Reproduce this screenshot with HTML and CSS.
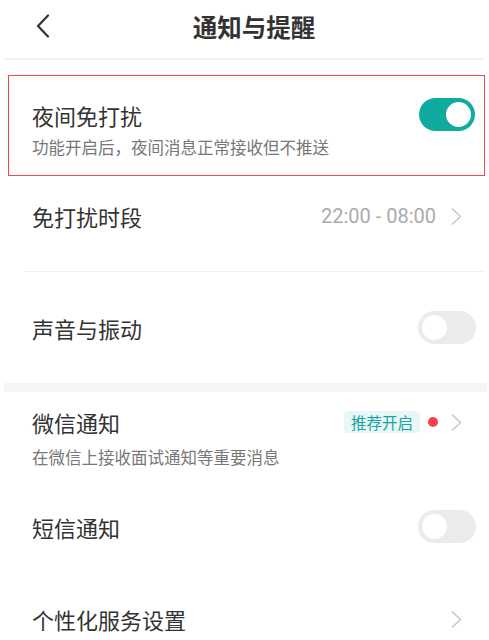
FILE: index.html
```html
<!DOCTYPE html>
<html lang="zh-CN">
<head>
    <meta charset="UTF-8">
    <meta name="viewport" content="width=device-width, initial-scale=1.0">
    <title>通知与提醒</title>
    <link rel="stylesheet" href="styles.css">
</head>
<body>
    <header class="topbar">
        <a class="back" href="#">
            <svg width="14" height="24" viewBox="0 0 14 24"><path d="M12 1.5 L2 12 L12 22.5" fill="none" stroke="#333" stroke-width="2.2" stroke-linecap="round" stroke-linejoin="round"/></svg>
        </a>
        <h1>通知与提醒</h1>
        <span class="spacer"></span>
    </header>
    <div class="line"></div>

    <section class="highlight">
        <div class="row-main">
            <span class="label">夜间免打扰</span>
            <span class="switch on"></span>
        </div>
        <p class="desc">功能开启后，夜间消息正常接收但不推送</p>
    </section>

    <div class="item item-period">
        <span class="label">免打扰时段</span>
        <span class="extra">
            <span class="value">22:00 - 08:00</span>
            <svg class="arrow" width="12" height="19" viewBox="0 0 12 19"><path d="M2 1.5 L10.5 9.5 L2 17.5" fill="none" stroke="#c6c6c6" stroke-width="1.5" stroke-linejoin="round"/></svg>
        </span>
    </div>
    <div class="thin"></div>

    <div class="item item-toggle">
        <span class="label">声音与振动</span>
        <span class="switch"></span>
    </div>
    <div class="thick"></div>

    <div class="item item-wechat">
        <div class="row-main">
            <span class="label">微信通知</span>
            <span class="extra">
                <span class="badge">推荐开启</span>
                <span class="dot"></span>
                <svg class="arrow" width="12" height="19" viewBox="0 0 12 19"><path d="M2 1.5 L10.5 9.5 L2 17.5" fill="none" stroke="#c6c6c6" stroke-width="1.5" stroke-linejoin="round"/></svg>
            </span>
        </div>
        <p class="desc">在微信上接收面试通知等重要消息</p>
    </div>

    <div class="item item-toggle item-sms">
        <span class="label">短信通知</span>
        <span class="switch"></span>
    </div>

    <div class="item item-last">
        <span class="label">个性化服务设置</span>
        <span class="extra">
            <svg class="arrow" width="12" height="19" viewBox="0 0 12 19"><path d="M2 1.5 L10.5 9.5 L2 17.5" fill="none" stroke="#c6c6c6" stroke-width="1.5" stroke-linejoin="round"/></svg>
        </span>
    </div>
</body>
</html>
```

FILE: styles.css
```css
/* 基础 */
body {
    margin: 0;
    padding: 0;
    background-color: #fff;
    color: #333;
    font-family: "Noto Sans CJK SC", "Noto Sans", sans-serif;
    overflow: hidden;
}

p {
    margin: 0;
}

/* 顶部栏 */
.topbar {
    display: flex;
    align-items: center;
    height: 52px;
    margin-bottom: 6px;
}

.back {
    display: flex;
    align-items: center;
    width: 60px;
    padding-left: 36px;
    box-sizing: border-box;
}

.topbar h1 {
    flex: 1;
    margin: 0;
    text-align: center;
    font-size: 24.5px;
    font-weight: bold;
    color: #333;
}

.spacer {
    width: 41px;
}

.line {
    height: 2px;
    margin: 0 4px;
    background-color: #f3f3f3;
}

/* 列表 */
.label {
    font-size: 22px;
    line-height: 28px;
    color: #333;
}

.desc {
    font-size: 16.5px;
    line-height: 22px;
    color: #777;
}

.row-main {
    display: flex;
    align-items: center;
    justify-content: space-between;
}

.highlight {
    margin: 15px 4px 0 8px;
    padding: 22px 9px 17px 23px;
    border: 1px solid #f2474d;
}

.highlight .desc {
    margin-top: 5px;
}

.item {
    display: flex;
    align-items: center;
    justify-content: space-between;
    padding: 0 27px 0 32px;
}

.item-period {
    padding-top: 26px;
    padding-bottom: 41px;
}

.item-toggle {
    padding-top: 39px;
    padding-bottom: 39px;
    padding-right: 13px;
}

.item-wechat {
    display: block;
    padding-top: 16px;
    padding-bottom: 3px;
}

.item-wechat .desc {
    margin-top: 10px;
}

.item-last {
    padding-top: 23px;
}

.extra {
    display: flex;
    align-items: center;
}

.value {
    font-family: Roboto, sans-serif;
    font-size: 20px;
    color: #ababab;
    margin-right: 14px;
}

.arrow {
    display: block;
}

.badge {
    padding: 0 7px;
    height: 22px;
    line-height: 22px;
    border-radius: 4px;
    background-color: #e7f6f6;
    color: #1aa59c;
    font-size: 15.5px;
}

.dot {
    width: 10px;
    height: 10px;
    margin: 0 12px 0 8px;
    border-radius: 50%;
    background-color: #f5404f;
}

.thin {
    height: 1px;
    margin: 0 6px 0 24px;
    background-color: #efefef;
}

.thick {
    height: 9px;
    margin: 0 2px 0 4px;
    background-color: #f5f5f5;
}

/* 开关 */
.switch {
    position: relative;
    width: 58px;
    height: 33px;
    border-radius: 17px;
    background-color: #ebebeb;
}

.switch::after {
    content: "";
    position: absolute;
    top: 4px;
    left: 4px;
    width: 25px;
    height: 25px;
    border-radius: 50%;
    background-color: #fff;
}

.switch.on {
    width: 56px;
    background-color: #10aba0;
}

.switch.on::after {
    left: auto;
    right: 4px;
}
```
